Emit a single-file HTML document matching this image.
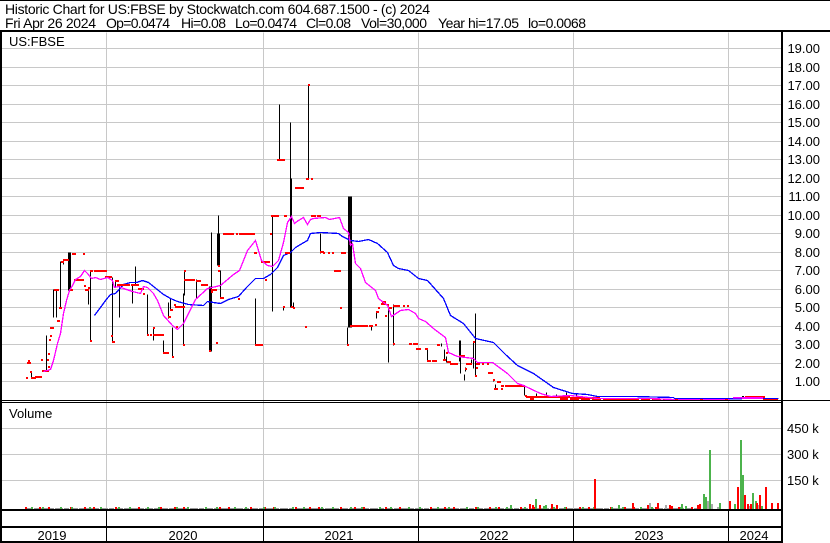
<!DOCTYPE html>
<html><head><meta charset="utf-8"><title>Historic Chart for US:FBSE</title>
<style>
html,body{margin:0;padding:0;background:#fff;width:830px;height:543px;overflow:hidden}
svg{display:block}
text{font-family:"Liberation Sans",Arial,sans-serif;font-size:13px;fill:#000}
text.t{font-size:14px}
</style></head><body>
<svg width="830" height="543" viewBox="0 0 830 543" xmlns="http://www.w3.org/2000/svg">
<rect width="830" height="543" fill="#fff"/>
<g transform="translate(.5,.5)" shape-rendering="crispEdges" fill="none">
<!-- grid -->
<path stroke="#c8c8c8" d="M0 48H781M0 67H781M0 85H781M0 104H781M0 122H781M0 141H781M0 159H781M0 178H781M0 196H781M0 215H781M0 233H781M0 252H781M0 270H781M0 289H781M0 307H781M0 326H781M0 344H781M0 363H781M0 381H781M0 428H781M0 454H781M0 480H781M106 32V509M263 32V509M418 32V509M573 32V509M728 32V509"/>
<!-- thin black bars -->
<path stroke="#000" d="M31 372V378M46 335V371M53 289V317M56 289V317M60 261V308M63 261V264M88 288V304M90 271V341M112 277V341M115 280V287M119 285V317M132 285V303M135 266V285M147 294V335M153 327V340M163 340V353M168 302V318M170 298V310M172 327V357M183 293V345M184 270V295M196 279V298M211 232V290M218 215V233M220 270V298M255 298V345M272 215V311M279 104V160M290 122V178M283 306V310M293 302V307M308 85V179M320 233V253M347 327V345M371 325V330M376 312V318M388 306V362M393 304V345M427 349V361M441 343V346M444 349V360M446 356V362M460 361V373M464 374V380M465 367V371M471 359V364M473 341V368M475 313V376M493 379V381M495 384V389M524 386V395M536 393V397M546 392V397M556 394V397M566 392V397M576 394V397"/>
<!-- thick black bars -->
<path stroke="#000" stroke-width="3" d="M69 252V290M210 286V351M218 233V265"/>
<path stroke="#000" stroke-width="2" d="M290.5 178V307M459.5 340V361"/>
<path stroke="#000" stroke-width="4" d="M349.5 196V327"/>
<!-- blue MA -->
<path stroke="#00f" stroke-width="1.3" d="M94 315L100 307 105 300 110 294 115 293 123 284 130 282 136 282 142 280 148 282 153 286 158 290 163 294 170 298 177 301 188 304 203 305 207 301 213 302 220 303 228 299 238 296 246 287 255 278 263 278 270 274 277 267 283 255 290 252 295 247 300 244 307 240 310 233 320 232 338 233 342 236 350 240 358 241 368 239 377 243 387 252 393 265 398 268 408 270 418 278 427 280 435 289 443 298 450 315 463 323 475 338 493 342 505 354 517 365 533 373 553 387 572 393 587 394 597 396 633 396 673 397 674 398 730 398 741 398 778 398"/>
</g>
<g shape-rendering="crispEdges" fill="none">
<!-- red ticks -->
<path stroke="#f00" stroke-width="2" d="M26 378h2M27 363h4M28 361h2M30 372h2M31 378h5M35 377h7M41 360h2M42 371h7M47 360h2M48 354h2M48 367h2M49 340h2M50 336h2M50 328h4M57 321h3M59 308h3M54 290h5M61 262h3M63 260h6M69 290h4M72 254h4M83 254h2M74 280h10M84 286h2M85 290h4M88 288h2M90 271h3M94 271h13M90 341h2M105 277h7M111 336h2M112 342h3M115 281h4M117 285h13M131 285h8M138 289h6M143 294h2M147 335h2M150 335h2M153 335h11M153 328h2M163 353h6M168 317h3M170 310h3M172 357h2M174 305h2M175 307h10M176 327h2M183 345h2M184 271h2M184 280h11M196 281h5M201 285h7M209 351h2M211 290h6M211 292h2M216 343h2M218 266h2M218 271h2M220 298h4M223 234h11M236 234h2M239 234h16M238 299h2M255 345h8M254 253h3M261 262h9M265 280h2M270 234h2M271 216h8M284 216h3M283 307h2M285 253h5M277 160h8M295 188h9M308 85h2M306 179h3M311 179h2M291 307h2M293 308h2M311 216h5M317 216h4M320 252h4M323 253h2M328 253h2M332 253h2M341 253h5M305 327h2M334 271h7M340 308h2M347 345h2M350 326h18M369 326h4M375 325h2M376 312h3M378 308h2M381 304h5M382 302h4M385 316h2M387 305h2M388 308h4M393 306h7M403 306h2M407 306h2M393 344h2M409 344h3M413 344h5M416 349h5M425 349h3M427 361h4M432 361h5M437 345h3M446 353h2M443 360h3M447 362h4M450 364h8M459 356h6M465 369h2M466 364h6M473 342h2M475 376h2M476 364h4M476 368h2M482 364h2M487 364h2M488 373h5M493 380h2M497 382h4M494 389h4M501 386h3M501 389h2M505 386h20M525 396h2M526 397h44M530 399h4M560 399h8M570 398h30M605 399h25"/>
<path stroke="#f00" stroke-width="2" stroke-dasharray="9 2" d="M630 400H673"/>
<path stroke="#f00" stroke-width="2" stroke-dasharray="9 2" d="M570 400H630"/>
<!-- cluster near 2024 -->
<path stroke="#000" stroke-width="2" stroke-dasharray="2 2" d="M742 397H754"/>
<path stroke="#f00" stroke-width="2" d="M745 397h20M763 400h15"/>
<!-- magenta MA -->
<g transform="translate(.5,.5)"><path stroke="#f0f" stroke-width="1.3" d="M43 371L50 369 53 360 57 343 60 333 63 313 66 300 69 290 72 285 75 279 80 276 84 270 87 273 91 278 95 277 100 279 107 277 112 280 114 287 118 286 123 288 132 291 140 293 143 286 147 287 153 293 157 300 163 315 172 325 177 329 183 323 192 305 195 299 207 288 220 285 233 274 239 270 247 250 255 240 261 260 267 265 272 266 278 260 283 242 287 222 291 216 294 223 298 220 303 217 307 224 310 219 313 218 325 217 329 219 339 217 343 228 348 232 350 245 352 243 355 263 360 268 365 282 375 290 378 298 387 305 391 316 400 310 408 309 415 313 418 318 425 321 433 328 445 337 448 352 457 356 473 358 477 362 492 362 507 373 517 383 523 385 540 393 550 396 570 395 597 398 650 398 673 399"/></g>
<path stroke="#f0f" stroke-width="2" d="M673 400H730M733 398H763"/>
<path stroke="#00f" d="M730 399H742"/>
<path stroke="#f00" stroke-width="2" stroke-dasharray="3 22" d="M675 400H730"/>
<!-- volume noise -->
<path stroke="#999" stroke-width="1" stroke-dasharray="8 1 5 1" d="M25 508.5H700"/>
<path stroke="#f00" stroke-width="2" stroke-dasharray="2 12 2 7 2 20" d="M25 508H700"/>
<path stroke="#4cb34c" stroke-width="2" stroke-dasharray="2 9 2 16" d="M31 508H700"/>
<!-- volume green -->
<path stroke="#4cb34c" stroke-width="2" d="M536 509V499M511 509V505M530 509V504M544 509V506M546 509V505M619 509V505M682 509V504M686 509V506M704 509V494M706 509V497M710 509V450M720 509V503M735 509V504M741 509V440M743 509V475M745 509V505M749 509V507M753 509V493M756 509V501M762 509V506"/>
<!-- volume grey -->
<path stroke="#aaa" stroke-width="2" d="M650 509V503M666 509V505M708 509V501M712 509V504M718 509V507M749 509V506M758 509V505"/>
<!-- volume red -->
<path stroke="#f00" stroke-width="2" d="M530 509V504M533 509V505M540 509V505M552 509V504M557 509V505M595 509V479M633 509V503M648 509V505M658 509V503M670 509V505M672 509V506M698 509V505M730 509V501M738 509V487M745 509V495M748 509V504M751 509V504M757 509V503M760 509V495M766 509V487M772 509V503M778 509V503M692 509V507M700 509V504"/>
<!-- frame -->
<path stroke="#000" d="M0 400.5H830M0 402.5H781M106.5 510V541M263.5 510V541M418.5 510V541M573.5 510V541M728.5 510V541M0 .5H830"/>
<path stroke="#000" stroke-width="2" d="M0 31H830M0 510H783M0 527H783M0 542H783M1 31V543M782 31V543"/>
</g>
<text class="t" x="5" y="14" textLength="425" lengthAdjust="spacing">Historic Chart for US:FBSE by Stockwatch.com 604.687.1500 - (c) 2024</text>
<g class="l2">
<text class="t" x="5" y="28" textLength="91">Fri Apr 26 2024</text>
<text class="t" x="106" y="28" textLength="64">Op=0.0474</text>
<text class="t" x="181" y="28" textLength="45">Hi=0.08</text>
<text class="t" x="235" y="28" textLength="62">Lo=0.0474</text>
<text class="t" x="306" y="28" textLength="45">Cl=0.08</text>
<text class="t" x="361" y="28" textLength="66">Vol=30,000</text>
<text class="t" x="438" y="28" textLength="81">Year hi=17.05</text>
<text class="t" x="528" y="28" textLength="58">lo=0.0068</text>
</g>
<text x="9" y="46">US:FBSE</text>
<text x="9" y="418">Volume</text>
<g text-anchor="end">
<text x="820" y="53">19.00</text><text x="820" y="72">18.00</text><text x="820" y="90">17.00</text><text x="820" y="109">16.00</text><text x="820" y="127">15.00</text><text x="820" y="146">14.00</text><text x="820" y="164">13.00</text><text x="820" y="183">12.00</text><text x="820" y="201">11.00</text><text x="820" y="220">10.00</text><text x="820" y="238">9.00</text><text x="820" y="257">8.00</text><text x="820" y="275">7.00</text><text x="820" y="294">6.00</text><text x="820" y="312">5.00</text><text x="820" y="331">4.00</text><text x="820" y="349">3.00</text><text x="820" y="368">2.00</text><text x="820" y="386">1.00</text>
</g>
<text x="787" y="433">450 k</text><text x="787" y="459">300 k</text><text x="787" y="485">150 k</text>
<g text-anchor="middle">
<text x="52" y="540">2019</text><text x="183" y="540">2020</text><text x="339" y="540">2021</text><text x="494" y="540">2022</text><text x="649" y="540">2023</text><text x="754" y="540">2024</text>
</g>
</svg>
</body></html>
